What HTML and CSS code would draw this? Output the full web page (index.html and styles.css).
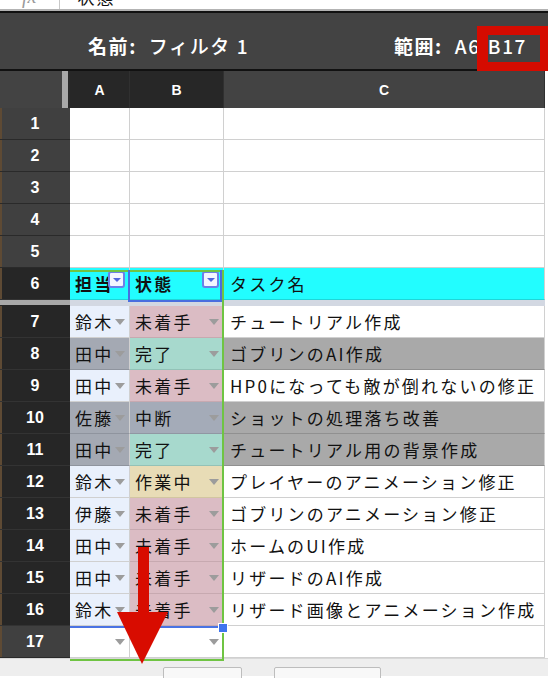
FILE: index.html
```html
<!DOCTYPE html>
<html lang="ja">
<head>
    <meta charset="UTF-8">
    <title>フィルタ 1</title>
    <link rel="stylesheet" href="styles.css">
</head>
<body>
<div id="wrap">
    <div class="formula">
        <span class="fx">fx</span>
        <span class="fsep"></span>
        <span class="fval">状態</span>
    </div>
    <div class="filterbar">
        <span class="fname"><b>名前:</b> フィルタ 1</span>
        <span class="frange"><b>範囲:</b> A6:B17</span>
    </div>

    <div class="sheet">
        <div class="row head">
            <div class="corner"></div>
            <div class="colh sel">A</div>
            <div class="colh sel">B</div>
            <div class="colh">C</div>
        </div>

        <div class="row"><div class="num">1</div><div class="cell"></div><div class="cell"></div><div class="cell"></div></div>
        <div class="row"><div class="num">2</div><div class="cell"></div><div class="cell"></div><div class="cell"></div></div>
        <div class="row"><div class="num">3</div><div class="cell"></div><div class="cell"></div><div class="cell"></div></div>
        <div class="row"><div class="num">4</div><div class="cell"></div><div class="cell"></div><div class="cell"></div></div>
        <div class="row"><div class="num">5</div><div class="cell"></div><div class="cell"></div><div class="cell"></div></div>

        <div class="row">
            <div class="num on">6</div>
            <div class="cell cyan bold">担当<span class="fbtn"></span></div>
            <div class="cell cyan bold">状態<span class="fbtn"></span></div>
            <div class="cell cyan">タスク名</div>
        </div>

        <div class="freeze"><div class="fz-num"></div><div class="fz-cells"></div></div>

        <div class="row">
            <div class="num on">7</div>
            <div class="cell who dd">鈴木</div>
            <div class="cell st-todo dd">未着手</div>
            <div class="cell">チュートリアル作成</div>
        </div>
        <div class="row">
            <div class="num on">8</div>
            <div class="cell who-off dd">田中</div>
            <div class="cell st-done dd">完了</div>
            <div class="cell task-off">ゴブリンのAI作成</div>
        </div>
        <div class="row">
            <div class="num on">9</div>
            <div class="cell who dd">田中</div>
            <div class="cell st-todo dd">未着手</div>
            <div class="cell">HP0になっても敵が倒れないの修正</div>
        </div>
        <div class="row">
            <div class="num on">10</div>
            <div class="cell who-off dd">佐藤</div>
            <div class="cell st-stop dd">中断</div>
            <div class="cell task-off">ショットの処理落ち改善</div>
        </div>
        <div class="row">
            <div class="num on">11</div>
            <div class="cell who-off dd">田中</div>
            <div class="cell st-done dd">完了</div>
            <div class="cell task-off">チュートリアル用の背景作成</div>
        </div>
        <div class="row">
            <div class="num on">12</div>
            <div class="cell who dd">鈴木</div>
            <div class="cell st-doing dd">作業中</div>
            <div class="cell">プレイヤーのアニメーション修正</div>
        </div>
        <div class="row">
            <div class="num on">13</div>
            <div class="cell who dd">伊藤</div>
            <div class="cell st-todo dd">未着手</div>
            <div class="cell">ゴブリンのアニメーション修正</div>
        </div>
        <div class="row">
            <div class="num on">14</div>
            <div class="cell who dd">田中</div>
            <div class="cell st-todo dd">未着手</div>
            <div class="cell">ホームのUI作成</div>
        </div>
        <div class="row">
            <div class="num on">15</div>
            <div class="cell who dd">田中</div>
            <div class="cell st-todo dd">未着手</div>
            <div class="cell">リザードのAI作成</div>
        </div>
        <div class="row">
            <div class="num on">16</div>
            <div class="cell who dd">鈴木</div>
            <div class="cell st-todo dd">未着手</div>
            <div class="cell">リザード画像とアニメーション作成</div>
        </div>
        <div class="row">
            <div class="num">17</div>
            <div class="cell dd"></div>
            <div class="cell dd"></div>
            <div class="cell"></div>
        </div>
    </div>

    <div class="footer">
        <span class="btn b1"></span>
        <span class="btn b2"></span>
    </div>

    <!-- 選択範囲の枠 -->
    <div class="range-green"></div>
    <div class="active-cell"></div>
    <div class="sel-bottom"></div>
    <div class="fill-handle"></div>

    <!-- 注釈 -->
    <div class="mark"></div>
    <svg class="arrow" width="51" height="117" viewBox="0 0 51 117">
        <rect x="21" y="0" width="11" height="66" fill="#d80c00"/>
        <polygon points="0,65 51,65 25,117" fill="#d80c00"/>
    </svg>
</div>
</body>
</html>
```

FILE: styles.css
```css
* {
    margin: 0;
    padding: 0;
    box-sizing: border-box;
}
body {
    width: 548px;
    height: 678px;
    overflow: hidden;
    background: #fff;
    font-family: "Noto Sans CJK JP", "Liberation Sans", sans-serif;
}
#wrap {
    width: 548px;
    height: 678px;
    position: relative;
    overflow: hidden;
}

/* 数式バー(上が切れている) */
.formula {
    height: 11px;
    display: flex;
    align-items: flex-end;
    overflow: hidden;
    border-bottom: 2px solid #b3b3b3;
}
.fx {
    margin-left: 22px;
    margin-bottom: 3px;
    font-family: "Liberation Serif", serif;
    font-style: italic;
    font-size: 20px;
    line-height: 20px;
    color: #9a9a9a;
}
.fsep {
    width: 1px;
    height: 11px;
    margin-left: 23px;
    background: #c8c8c8;
    align-self: stretch;
}
.fval {
    margin-left: 17px;
    margin-bottom: 4px;
    font-size: 17px;
    line-height: 17px;
    letter-spacing: 2px;
    color: #111;
}

/* フィルタ名の帯 */
.filterbar {
    height: 60px;
    background: #434343;
    border-top: 2px solid #111;
    border-bottom: 2px solid #111;
    display: flex;
    align-items: center;
    justify-content: space-between;
    padding: 8px 21px 0 88px;
    color: #fff;
    font-size: 19px;
    letter-spacing: 1.6px;
}
.filterbar b {
    font-weight: 700;
    margin-right: 6px;
}
.fname, .frange {
    font-weight: 500;
}

/* シート */
.row {
    display: grid;
    grid-template-columns: 70px 60px 94px 321px;
    height: 32px;
}
.row.head {
    height: 37px;
}
.corner {
    background: linear-gradient(to right, #434343 62px, #a9a9a9 62px, #a9a9a9 68px, #2a2a2a 68px);
}
.colh {
    background: #434343;
    border-right: 1px solid #303030;
    color: #fff;
    font-family: "Liberation Sans", sans-serif;
    font-weight: 700;
    font-size: 14px;
    display: flex;
    align-items: center;
    justify-content: center;
}
.colh.sel {
    background: #272727;
}
.num {
    background: #404040;
    border-bottom: 1px solid #2a2a2a;
    box-shadow: inset 2px 0 0 #5e4a34;
    color: #fff;
    font-family: "Liberation Sans", sans-serif;
    font-weight: 700;
    font-size: 16px;
    display: flex;
    align-items: center;
    justify-content: center;
}
.num.on {
    background: #262626;
    border-bottom-color: #333;
}
.cell {
    border-right: 1px solid #d0d0d0;
    border-bottom: 1px solid #d0d0d0;
    display: flex;
    align-items: center;
    padding-left: 5px;
    position: relative;
    white-space: nowrap;
    overflow: hidden;
    font-size: 17px;
    letter-spacing: 2.2px;
    color: #111;
}
.row .cell:last-child {
    padding-left: 6px;
}
.cyan {
    background: #22fdff;
    border-bottom-color: #1fd6d8;
}
.bold {
    font-weight: 700;
}
.who {
    background: #e9f0fc;
}
.who-off {
    background: #a4a9b3;
    border-bottom-color: #8f949e;
}
.st-todo {
    background: #dbbcc4;
    border-right-color: #c7a4ad;
    border-bottom-color: #c7a9b0;
}
.st-done {
    background: #a7d9cd;
    border-bottom-color: #93c2b7;
}
.st-stop {
    background: #a4abb8;
    border-bottom-color: #9097a3;
}
.st-doing {
    background: #e8dcb6;
    border-bottom-color: #d2c6a1;
}
.task-off {
    background: #a9a9a9;
    border-bottom-color: #909090;
}

/* 入力規則の▼ */
.dd::after {
    content: "";
    position: absolute;
    right: 4px;
    top: 13px;
    border-left: 5px solid transparent;
    border-right: 5px solid transparent;
    border-top: 6px solid #9c9c9c;
}

/* フィルタボタン */
.fbtn {
    position: absolute;
    right: 4px;
    top: 3px;
    width: 17px;
    height: 17px;
    border: 2px solid #6d7fe8;
    border-radius: 3px;
    background: #f3f5ff;
}
.fbtn::after {
    content: "";
    position: absolute;
    left: 3px;
    top: 5px;
    border-left: 4px solid transparent;
    border-right: 4px solid transparent;
    border-top: 4px solid #5266dc;
}

/* 固定行の区切り */
.freeze {
    display: grid;
    grid-template-columns: 70px 475px;
    height: 6px;
}
.fz-num {
    background: #a8a8a8;
    border-bottom: 1px solid #262626;
}
.fz-cells {
    background: #d3d8e2;
}

.footer {
    height: 18px;
    background: #eeeeee;
    border-top: 1px solid #d8d8d8;
    display: flex;
    gap: 32px;
    padding: 8px 0 0 163px;
}
.btn {
    height: 22px;
    background: #f8f8f8;
    border: 1px solid #bdbdbd;
    border-radius: 2px;
}
.b1 {
    width: 79px;
}
.b2 {
    width: 107px;
}

/* 選択範囲 */
.range-green {
    position: absolute;
    left: 70px;
    top: 270px;
    width: 154px;
    height: 391px;
    border: 2px solid #6fc443;
    border-left: none;
}
.active-cell {
    position: absolute;
    left: 128px;
    top: 270px;
    width: 94px;
    height: 32px;
    border: 2px solid #4a6edf;
    border-top: none;
}
.sel-bottom {
    position: absolute;
    left: 70px;
    top: 626px;
    width: 150px;
    height: 2px;
    background: #4a73e3;
}
.fill-handle {
    position: absolute;
    left: 218px;
    top: 623px;
    width: 10px;
    height: 10px;
    background: #3f74ee;
    border: 1px solid #fff;
}

/* 赤い注釈 */
.mark {
    position: absolute;
    left: 477px;
    top: 26px;
    width: 71px;
    height: 45px;
    border: solid #d50b00;
    border-width: 9px 8px 9px 11px;
}
.arrow {
    position: absolute;
    left: 117px;
    top: 547px;
}
```
